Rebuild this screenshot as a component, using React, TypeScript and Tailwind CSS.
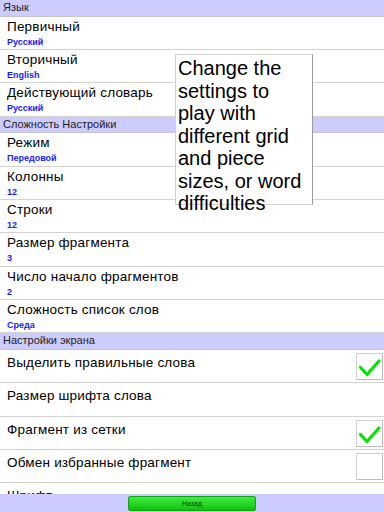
import React from "react";

type Row = { title: string; sub?: string; check?: "on" | "off" };
type Section = { header: string; rows: Row[] };

const sections: Section[] = [
  {
    header: "Язык",
    rows: [
      { title: "Первичный", sub: "Русский" },
      { title: "Вторичный", sub: "English" },
      { title: "Действующий словарь", sub: "Русский" },
    ],
  },
  {
    header: "Сложность Настройки",
    rows: [
      { title: "Режим", sub: "Передовой" },
      { title: "Колонны", sub: "12" },
      { title: "Строки", sub: "12" },
      { title: "Размер фрагмента", sub: "3" },
      { title: "Число начало фрагментов", sub: "2" },
      { title: "Сложность список слов", sub: "Среда" },
    ],
  },
  {
    header: "Настройки экрана",
    rows: [
      { title: "Выделить правильные слова", check: "on" },
      { title: "Размер шрифта слова" },
      { title: "Фрагмент из сетки", check: "on" },
      { title: "Обмен избранные фрагмент", check: "off" },
      { title: "Шрифт" },
    ],
  },
];

const tipLines = [
  "Change the",
  "settings to",
  "play with",
  "different grid",
  "and piece",
  "sizes, or word",
  "difficulties",
];

function CheckBox({ on }: { on: boolean }) {
  return (
    <div className="w-[27px] h-[27px] border border-[#cfcfcf] border-r-[#bdbdbd] border-b-[#bdbdbd] bg-white flex items-center justify-center">
      {on && (
        <svg width="25" height="25" viewBox="0 0 25 25">
          <path d="M3.5 13.5 L10 20.5 L22 7" fill="none" stroke="#00e600" strokeWidth="3.2" strokeLinecap="round" strokeLinejoin="round" />
        </svg>
      )}
    </div>
  );
}

export default function App() {
  return (
    <div
      className="relative w-[384px] h-[512px] bg-white flex flex-col overflow-hidden"
      style={{ fontFamily: '"Liberation Sans", Arial, sans-serif' }}
    >
      <div className="flex-1 overflow-hidden">
        {sections.map((s) => (
          <div key={s.header}>
            <div className="h-[16.67px] bg-[#ccccff] border-b border-[#c4c4c4] pl-[3px] text-[11px] leading-[15px] text-[#1c1c1c]">
              {s.header}
            </div>
            {s.rows.map((r) => (
              <div
                key={r.title}
                className={`h-[33.33px] border-b border-[#d2d2d2] flex items-start justify-between pl-[7px] ${r.sub ? "pt-[2px]" : "pt-[5px]"}`}
              >
                <div>
                  <div className="text-[13.5px] leading-[15px] text-black tracking-[0.2px]">{r.title}</div>
                  {r.sub && (
                    <div className="mt-[3px] text-[9px] leading-[11px] font-bold text-[#1a1aff]">{r.sub}</div>
                  )}
                </div>
                {r.check && (
                  <div className="mr-[1px] -mt-[2px]">
                    <CheckBox on={r.check === "on"} />
                  </div>
                )}
              </div>
            ))}
          </div>
        ))}
      </div>
      <div className="h-[18px] bg-[#ccccff] flex items-start justify-center pt-[2px]">
        <button className="w-[128px] h-[15px] rounded-[2px] border border-[#14a014] bg-gradient-to-b from-[#3cf03c] to-[#0cc00c] text-[7px] leading-[13px] text-[#1a3a1a]">
          Назад
        </button>
      </div>
      <div className="absolute left-[175px] top-[54px] w-[138px] h-[151px] bg-white border border-[#d0d0d0] border-r-[#9a9a9a] pl-[2px] pt-[2px] text-[20px] leading-[22.5px] text-black whitespace-nowrap">
        {tipLines.map((l) => (
          <div key={l}>{l}</div>
        ))}
      </div>
    </div>
  );
}
